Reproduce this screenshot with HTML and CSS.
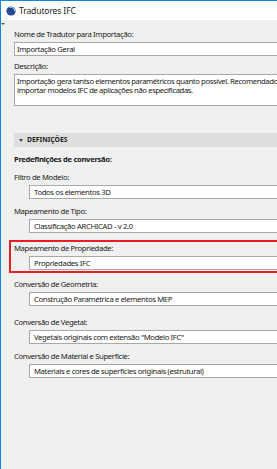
FILE: index.html
```html
<!DOCTYPE html>
<html lang="pt">
<head>
    <meta charset="UTF-8">
    <meta name="viewport" content="width=device-width, initial-scale=1.0">
    <title>Tradutores IFC</title>
    <link rel="stylesheet" href="styles.css">
</head>
<body>
    <div class="window">
        <!-- Title bar -->
        <div class="titlebar">
            <svg class="app-icon" width="10" height="10" viewBox="0 0 10 10">
                <defs>
                    <radialGradient id="globe" cx="0.35" cy="0.7" r="0.8">
                        <stop offset="0" stop-color="#2b4f9e"/>
                        <stop offset="1" stop-color="#1a3a80"/>
                    </radialGradient>
                </defs>
                <circle cx="5" cy="5" r="4.6" fill="url(#globe)"/>
                <path d="M3.2 1.4 A4 4 0 0 1 8.7 5.4" fill="none" stroke="#9cc8f2" stroke-width="1.2"/>
            </svg>
            <span class="title">Tradutores IFC</span>
        </div>

        <!-- Settings panel -->
        <div class="panel">
            <span class="corner-mark"></span>

            <div class="label">Nome de Tradutor para Importação:</div>
            <div class="input">Importação Geral</div>

            <div class="label label-desc">Descrição:</div>
            <div class="textarea">
                <div class="line">Importação gera tantso elementos paramétricos quanto possível. Recomendado</div>
                <div class="line">importar modelos IFC de aplicações não especificadas.</div>
            </div>

            <div class="section-bar"><span class="caret"></span>DEFINIÇÕES</div>

            <div class="subhead">Predefinições de conversão:</div>

            <div class="field">
                <div class="label">Filtro de Modelo:</div>
                <div class="select">Todos os elementos 3D</div>
            </div>

            <div class="field">
                <div class="label">Mapeamento de Tipo:</div>
                <div class="select">Classificação ARCHICAD - v 2.0</div>
            </div>

            <div class="field highlighted">
                <div class="label">Mapeamento de Propriedade:</div>
                <div class="select">Propriedades IFC</div>
            </div>

            <div class="field">
                <div class="label">Conversão de Geometria:</div>
                <div class="select">Construção Paramétrica e elementos MEP</div>
            </div>

            <div class="field field-loose">
                <div class="label">Conversão de Vegetal:</div>
                <div class="select">Vegetais originais com extensão "Modelo IFC"</div>
            </div>

            <div class="field">
                <div class="label">Conversão de Material e Superfície:</div>
                <div class="select">Materiais e cores de superfícies originais (estrutural)</div>
            </div>
        </div>
    </div>
</body>
</html>
```

FILE: styles.css
```css
/* Tradutores IFC dialog */
body {
    margin: 0;
    font-family: "Noto Sans", "Open Sans", sans-serif;
    font-size: 7.7px;
    color: #1a1a1a;
    background: #f0f0f0;
}

.window {
    height: 468px;
    border-top: 1px solid #1883d7;
    border-left: 1px solid #1883d7;
    background: #f0f0f0;
    overflow: hidden;
}

/* Title bar */
.titlebar {
    height: 19px;
    background: #fff;
    display: flex;
    align-items: center;
    gap: 3px;
    padding-left: 5px;
}

.app-icon {
    display: block;
}

.title {
    font-size: 8.6px;
    color: #222;
    letter-spacing: -0.15px;
}

/* Panel */
.panel {
    position: relative;
    padding: 9px 0 0 13px;
}

.corner-mark {
    position: absolute;
    left: 0;
    top: 3px;
    width: 0;
    height: 0;
    border-left: 2px solid transparent;
    border-right: 2px solid transparent;
    border-top: 2px solid #555;
}

.label {
    height: 10px;
    line-height: 10px;
    white-space: nowrap;
    letter-spacing: -0.35px;
}

.input,
.textarea,
.select {
    background: #fff;
    border: 1px solid #a8a8a8;
    white-space: nowrap;
    letter-spacing: -0.35px;
    margin-right: -40px;
}

.input {
    height: 12px;
    line-height: 12px;
    margin-top: 3px;
    padding-left: 2px;
}

.label-desc {
    margin-top: 5px;
}

.textarea {
    height: 28px;
    margin-top: 3px;
    padding: 2px 0 0 2px;
    letter-spacing: -0.4px;
}

.line {
    height: 9px;
    line-height: 9px;
}

/* Section header */
.section-bar {
    height: 14px;
    line-height: 14px;
    margin-top: 27px;
    margin-right: -40px;
    background: #dedede;
    font-size: 6.8px;
    font-weight: 700;
    color: #222;
    display: flex;
    align-items: center;
    gap: 4px;
    padding-left: 5px;
}

.caret {
    width: 0;
    height: 0;
    border-left: 2.5px solid transparent;
    border-right: 2.5px solid transparent;
    border-top: 3px solid #444;
}

.subhead {
    margin-top: 7px;
    height: 10px;
    line-height: 10px;
    font-weight: 700;
    letter-spacing: -0.35px;
}

/* Fields */
.field {
    margin-top: 8px;
}

.field + .field {
    margin-top: 7px;
}

.select {
    height: 12px;
    line-height: 12px;
    margin: 3px -40px 0 15px;
    padding-left: 4px;
}

.field.highlighted {
    margin-left: -5px;
    margin-right: -40px;
    margin-top: 7px;
    padding: 1px 40px 1px 3px;
    border: 2px solid #e81e25;
}

.field.highlighted + .field {
    margin-top: 6px;
}

.field-loose {
    margin-top: 11px !important;
}
```
